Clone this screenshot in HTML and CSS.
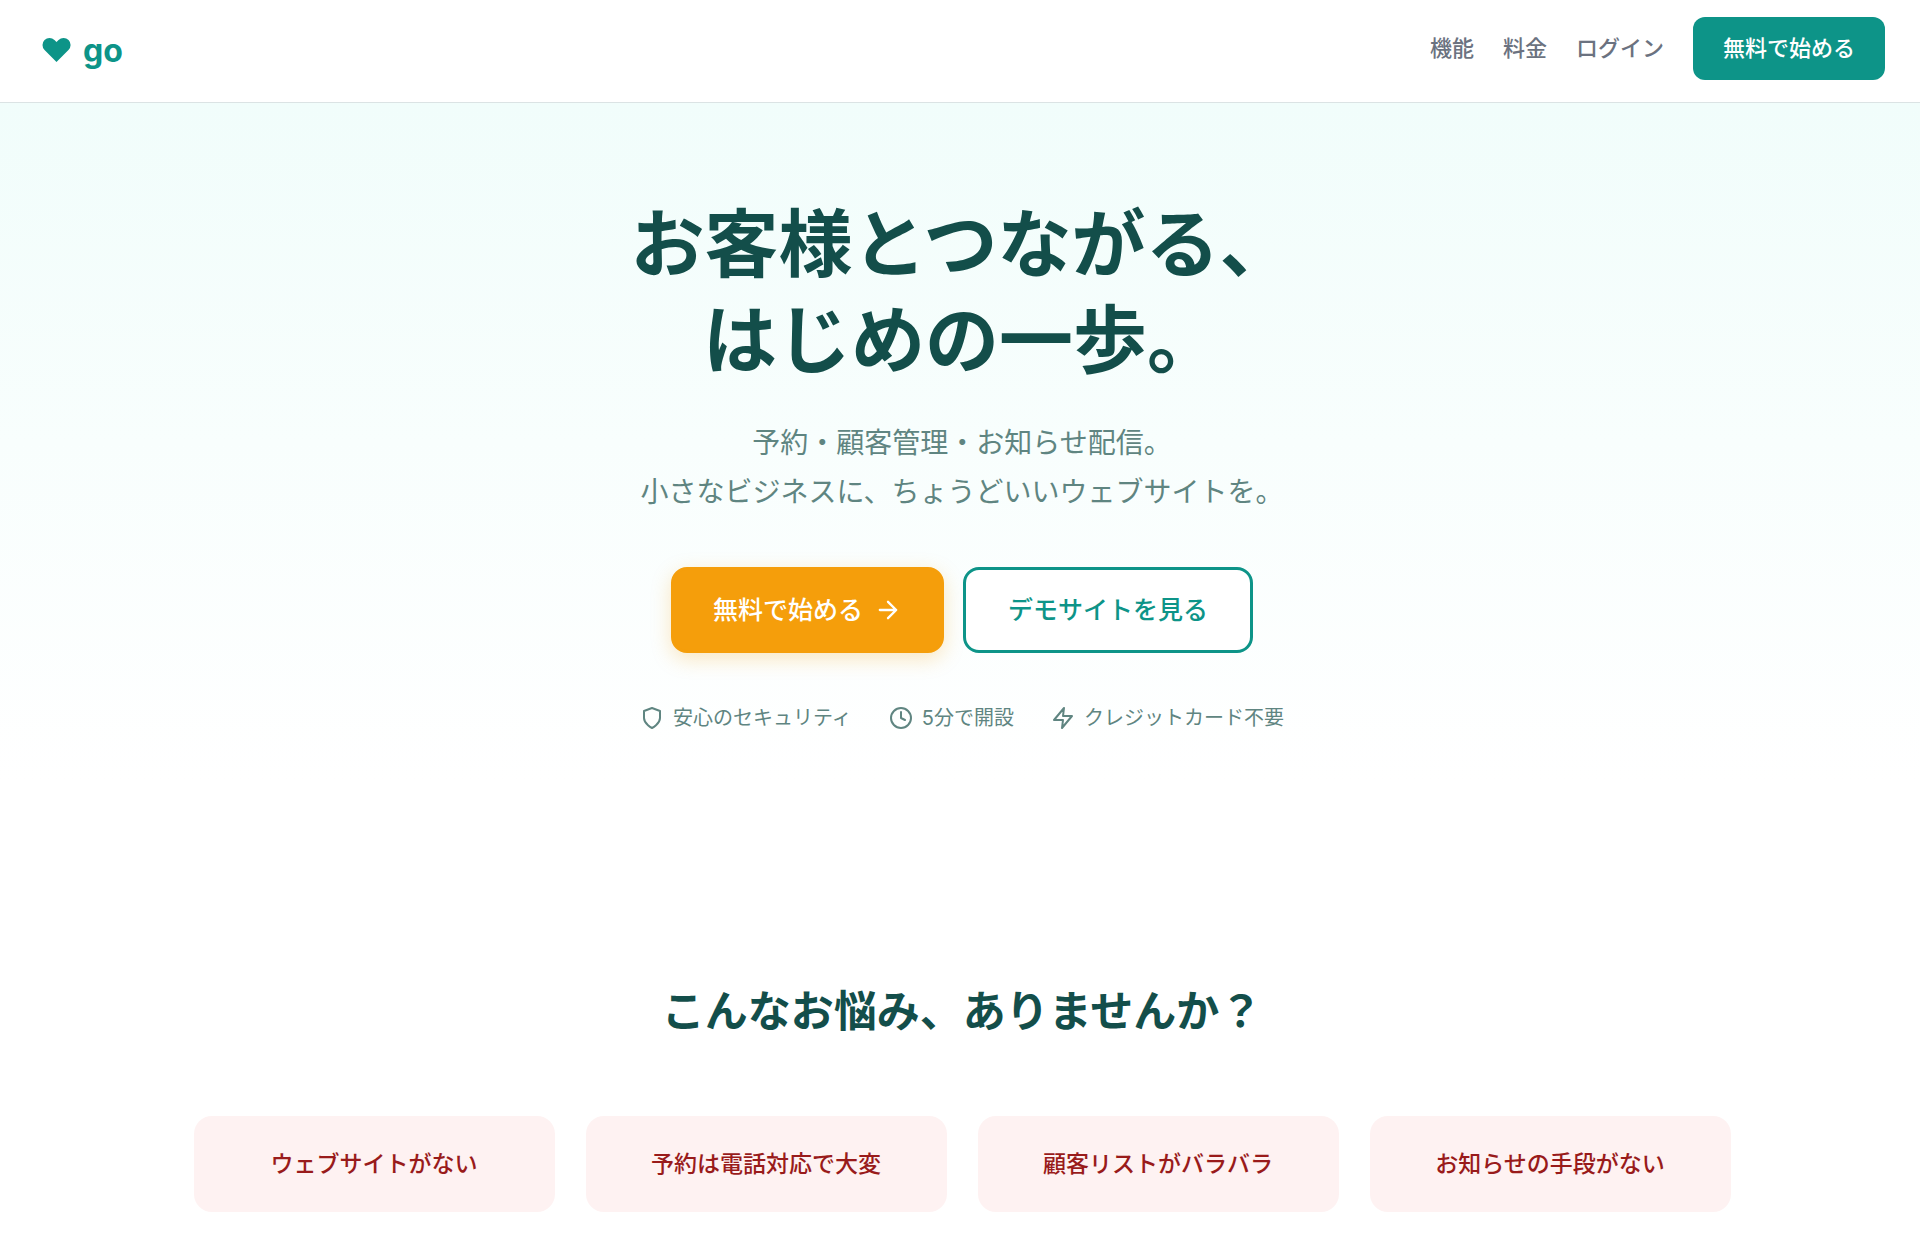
FILE: index.html
```html
<!DOCTYPE html>
<html lang="ja">
<head>
    <meta charset="UTF-8">
    <meta name="viewport" content="width=device-width, initial-scale=1.0">
    <title>go</title>
    <link rel="stylesheet" href="styles.css">
</head>
<body>
    <header class="header">
        <a class="logo" href="#">
            <svg class="logo-icon" viewBox="0 0 20 20" fill="currentColor" aria-hidden="true"><path d="M3.172 5.172a4 4 0 015.656 0L10 6.343l1.172-1.171a4 4 0 115.656 5.656L10 17.657l-6.828-6.829a4 4 0 010-5.656z"/></svg>
            <span class="logo-name">go</span>
        </a>
        <nav class="nav">
            <a class="nav-link" href="#features">機能</a>
            <a class="nav-link" href="#pricing">料金</a>
            <a class="nav-link" href="#login">ログイン</a>
            <a class="nav-cta" href="#signup">無料で始める</a>
        </nav>
    </header>

    <main>
        <section class="hero">
            <h1 class="hero-title">お客様とつながる、<br>はじめの一歩。</h1>
            <p class="hero-text">予約・顧客管理・お知らせ配信。<br>小さなビジネスに、ちょうどいいウェブサイトを。</p>
            <div class="hero-buttons">
                <a class="btn btn-primary" href="#signup">
                    無料で始める
                    <svg class="icon icon-lg" viewBox="0 0 24 24" aria-hidden="true"><path d="M5 12h14M12 5l7 7-7 7"/></svg>
                </a>
                <a class="btn btn-outline" href="#demo">デモサイトを見る</a>
            </div>
            <ul class="trust">
                <li class="trust-item">
                    <svg class="icon" viewBox="0 0 24 24" aria-hidden="true"><path d="M12 22s8-4 8-10V5l-8-3-8 3v7c0 6 8 10 8 10z"/></svg>
                    安心のセキュリティ
                </li>
                <li class="trust-item">
                    <svg class="icon" viewBox="0 0 24 24" aria-hidden="true"><circle cx="12" cy="12" r="10"/><path d="M12 6v6l4 2"/></svg>
                    5分で開設
                </li>
                <li class="trust-item">
                    <svg class="icon" viewBox="0 0 24 24" aria-hidden="true"><path d="M13 2L3 14h9l-1 8 10-12h-9l1-8z"/></svg>
                    クレジットカード不要
                </li>
            </ul>
        </section>

        <section class="problems">
            <h2 class="section-title">こんなお悩み、ありませんか？</h2>
            <div class="problem-grid">
                <div class="problem-card">ウェブサイトがない</div>
                <div class="problem-card">予約は電話対応で大変</div>
                <div class="problem-card">顧客リストがバラバラ</div>
                <div class="problem-card">お知らせの手段がない</div>
            </div>
        </section>
    </main>
</body>
</html>
```

FILE: styles.css
```css
* {
    box-sizing: border-box;
    margin: 0;
    padding: 0;
}
body {
    font-family: Inter, 'Noto Sans CJK JP', sans-serif;
    background: #fff;
    color: #134e4a;
}
a {
    text-decoration: none;
}

/* Header */
.header {
    display: flex;
    align-items: center;
    justify-content: space-between;
    padding: 17px 35px 22px 39px;
    background: #fff;
    border-bottom: 1px solid #dbe3e4;
}
.logo {
    display: flex;
    align-items: center;
    gap: 9px;
    color: #0d9488;
    font-size: 32px;
    line-height: 40px;
    font-weight: 700;
}
.logo-icon {
    width: 35px;
    height: 35px;
}
.logo-name {
    padding-top: 5px;
}
.nav {
    display: flex;
    align-items: center;
    gap: 29px;
    font-size: 22px;
    line-height: 31px;
    font-weight: 500;
}
.nav-link {
    color: #6b7280;
}
.nav-cta {
    padding: 16px 30px;
    border-radius: 12px;
    background: #0d9488;
    color: #fff;
}

/* Hero */
.hero {
    padding: 93px 22px 140px 26px;
    background: linear-gradient(180deg, #f1fdfb 0%, #fff 88%);
    text-align: center;
}
.hero-title {
    margin-bottom: 31px;
    font-size: 74px;
    line-height: 96px;
    font-weight: 700;
}
.hero-text {
    margin-bottom: 50px;
    color: #5f8581;
    font-size: 28px;
    line-height: 49px;
}
.hero-buttons {
    display: flex;
    flex-wrap: wrap;
    justify-content: center;
    gap: 19px;
    margin-bottom: 48px;
}
.icon {
    width: 24px;
    height: 24px;
    fill: none;
    stroke: currentColor;
    stroke-width: 2;
    stroke-linecap: round;
    stroke-linejoin: round;
}
.icon-lg {
    width: 28px;
    height: 28px;
}
.btn {
    display: flex;
    align-items: center;
    gap: 11px;
    padding: 22px 42px;
    border: 3px solid transparent;
    border-radius: 16px;
    font-size: 25px;
    line-height: 36px;
    font-weight: 500;
}
.btn-primary {
    padding: 22px 39px;
    border-color: #f59e0b;
    background: #f59e0b;
    color: #fff;
    box-shadow: 0 6px 20px rgba(245, 158, 11, 0.25);
}
.btn-outline {
    border-color: #0d9488;
    background: #fff;
    color: #0d9488;
}
.trust {
    display: flex;
    flex-wrap: wrap;
    justify-content: center;
    gap: 37px;
    list-style: none;
    color: #5f8581;
    font-size: 20px;
    line-height: 34px;
}
.trust-item {
    display: flex;
    align-items: center;
    gap: 9px;
}

/* Problems */
.problems {
    max-width: 1589px;
    margin: 0 auto;
    padding: 108px 24px 41px 28px;
}
.section-title {
    margin-bottom: 77px;
    font-size: 43px;
    line-height: 56px;
    font-weight: 700;
    text-align: center;
}
.problem-grid {
    display: grid;
    grid-template-columns: repeat(4, 1fr);
    gap: 31px;
}
.problem-card {
    padding: 30px 24px;
    border-radius: 18px;
    background: #fef2f2;
    color: #991b1b;
    font-size: 23px;
    line-height: 36px;
    font-weight: 500;
    text-align: center;
}
```
